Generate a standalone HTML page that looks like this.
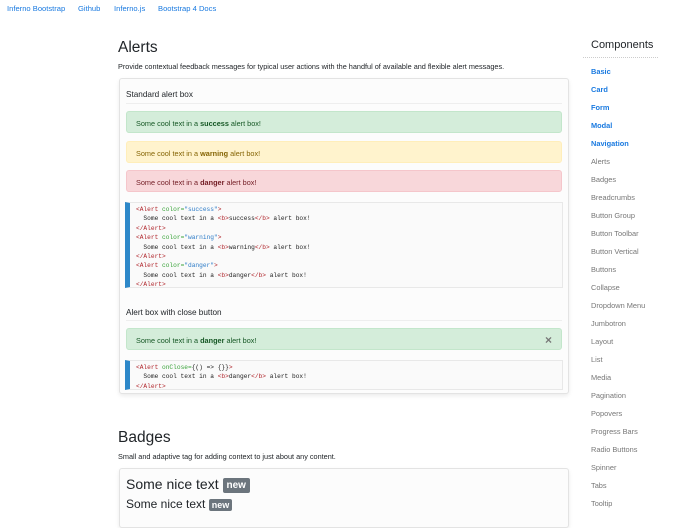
<!DOCTYPE html>
<html><head><style>
*{box-sizing:border-box;margin:0;padding:0}
body{width:688px;height:512px;overflow:hidden;background:#fff;font-family:"Liberation Sans",sans-serif;color:#212529;position:relative}
.abs{position:absolute}
.nav a{position:absolute;top:4px;font-size:7.6px;color:#1a7ae0;text-decoration:none}
h1{position:absolute;left:118px;font-size:15.5px;font-weight:400}
.p{position:absolute;left:118px;font-size:7.3px}
.card{position:absolute;left:119px;width:450px;border:1px solid #e3e3e3;border-radius:3px;background:#fcfcfc;box-shadow:0 2px 4px rgba(0,0,0,.08)}
.h{position:absolute;left:126px;font-size:8.2px;font-weight:500}
.hr{position:absolute;left:126px;width:436px;height:1px;background:#eee}
.al{position:absolute;left:126px;width:436px;height:22px;border-radius:3px;font-size:7.3px;padding:7px 9px;border:1px solid}
.s{background:#d4edda;color:#155724;border-color:#c3e6cb}
.w{background:#fff3cd;color:#856404;border-color:#ffeeba}
.d{background:#f8d7da;color:#721c24;border-color:#f5c6cb}
.code{position:absolute;left:125px;width:438px;border:1px solid #e8e8e8;border-left:5px solid #2d87c8;background:#fafafa;font-family:"Liberation Mono",monospace;font-size:6.2px;line-height:9.4px;padding:2px 6px;color:#222;white-space:pre}
.t{color:#b0262c}.a{color:#3aa33a}.v{color:#2d7cc8}
.side{position:absolute;left:591px;font-size:7.4px;color:#777}
.side.b{color:#1a7ae0;font-weight:700}
.badge{display:inline-block;background:#6c757d;color:#fff;font-weight:700;border-radius:2px;vertical-align:middle}
</style></head><body>
<div class="nav"><a style="left:7px">Inferno Bootstrap</a><a style="left:78px">Github</a><a style="left:114px">Inferno.js</a><a style="left:158px">Bootstrap 4 Docs</a></div>

<h1 style="top:39px">Alerts</h1>
<div class="p" style="top:62px">Provide contextual feedback messages for typical user actions with the handful of available and flexible alert messages.</div>
<div class="card" style="top:78px;height:316px"></div>
<div class="h" style="top:90px">Standard alert box</div>
<div class="hr" style="top:103px"></div>
<div class="al s" style="top:111px">Some cool text in a <b>success</b> alert box!</div>
<div class="al w" style="top:141px">Some cool text in a <b>warning</b> alert box!</div>
<div class="al d" style="top:170px">Some cool text in a <b>danger</b> alert box!</div>
<div class="code" style="top:202px;height:86px"><span class="t">&lt;Alert</span> <span class="a">color=</span><span class="v">"success"</span><span class="t">&gt;</span>
  Some cool text in a <span class="t">&lt;b&gt;</span>success<span class="t">&lt;/b&gt;</span> alert box!
<span class="t">&lt;/Alert&gt;</span>
<span class="t">&lt;Alert</span> <span class="a">color=</span><span class="v">"warning"</span><span class="t">&gt;</span>
  Some cool text in a <span class="t">&lt;b&gt;</span>warning<span class="t">&lt;/b&gt;</span> alert box!
<span class="t">&lt;/Alert&gt;</span>
<span class="t">&lt;Alert</span> <span class="a">color=</span><span class="v">"danger"</span><span class="t">&gt;</span>
  Some cool text in a <span class="t">&lt;b&gt;</span>danger<span class="t">&lt;/b&gt;</span> alert box!
<span class="t">&lt;/Alert&gt;</span></div>
<div class="h" style="top:308px">Alert box with close button</div>
<div class="hr" style="top:320px"></div>
<div class="al s" style="top:328px">Some cool text in a <b>danger</b> alert box!<span style="position:absolute;right:9px;top:4px;font-size:12px;color:#777;font-weight:700">×</span></div>
<div class="code" style="top:360px;height:30px"><span class="t">&lt;Alert</span> <span class="a">onClose=</span>{() =&gt; {}}<span class="t">&gt;</span>
  Some cool text in a <span class="t">&lt;b&gt;</span>danger<span class="t">&lt;/b&gt;</span> alert box!
<span class="t">&lt;/Alert&gt;</span></div>

<h1 style="top:429px">Badges</h1>
<div class="p" style="top:452px">Small and adaptive tag for adding context to just about any content.</div>
<div class="card" style="top:468px;height:60px"></div>
<div class="abs" style="left:126px;top:476px;font-size:14px">Some nice text <span class="badge" style="font-size:10px;padding:2px 4px">new</span></div>
<div class="abs" style="left:126px;top:497px;font-size:12px">Some nice text <span class="badge" style="font-size:9px;padding:1px 3px">new</span></div>

<div class="abs" style="left:591px;top:39px;font-size:11px;font-weight:500">Components</div>
<div class="abs" style="left:583px;top:57px;width:75px;border-top:1px dotted #ccc"></div>
<div class="side b" style="top:67px">Basic</div>
<div class="side b" style="top:85px">Card</div>
<div class="side b" style="top:103px">Form</div>
<div class="side b" style="top:121px">Modal</div>
<div class="side b" style="top:139px">Navigation</div>
<div class="side" style="top:157px">Alerts</div>
<div class="side" style="top:175px">Badges</div>
<div class="side" style="top:193px">Breadcrumbs</div>
<div class="side" style="top:211px">Button Group</div>
<div class="side" style="top:229px">Button Toolbar</div>
<div class="side" style="top:247px">Button Vertical</div>
<div class="side" style="top:265px">Buttons</div>
<div class="side" style="top:283px">Collapse</div>
<div class="side" style="top:301px">Dropdown Menu</div>
<div class="side" style="top:319px">Jumbotron</div>
<div class="side" style="top:337px">Layout</div>
<div class="side" style="top:355px">List</div>
<div class="side" style="top:373px">Media</div>
<div class="side" style="top:391px">Pagination</div>
<div class="side" style="top:409px">Popovers</div>
<div class="side" style="top:427px">Progress Bars</div>
<div class="side" style="top:445px">Radio Buttons</div>
<div class="side" style="top:463px">Spinner</div>
<div class="side" style="top:481px">Tabs</div>
<div class="side" style="top:499px">Tooltip</div>
</body></html>
